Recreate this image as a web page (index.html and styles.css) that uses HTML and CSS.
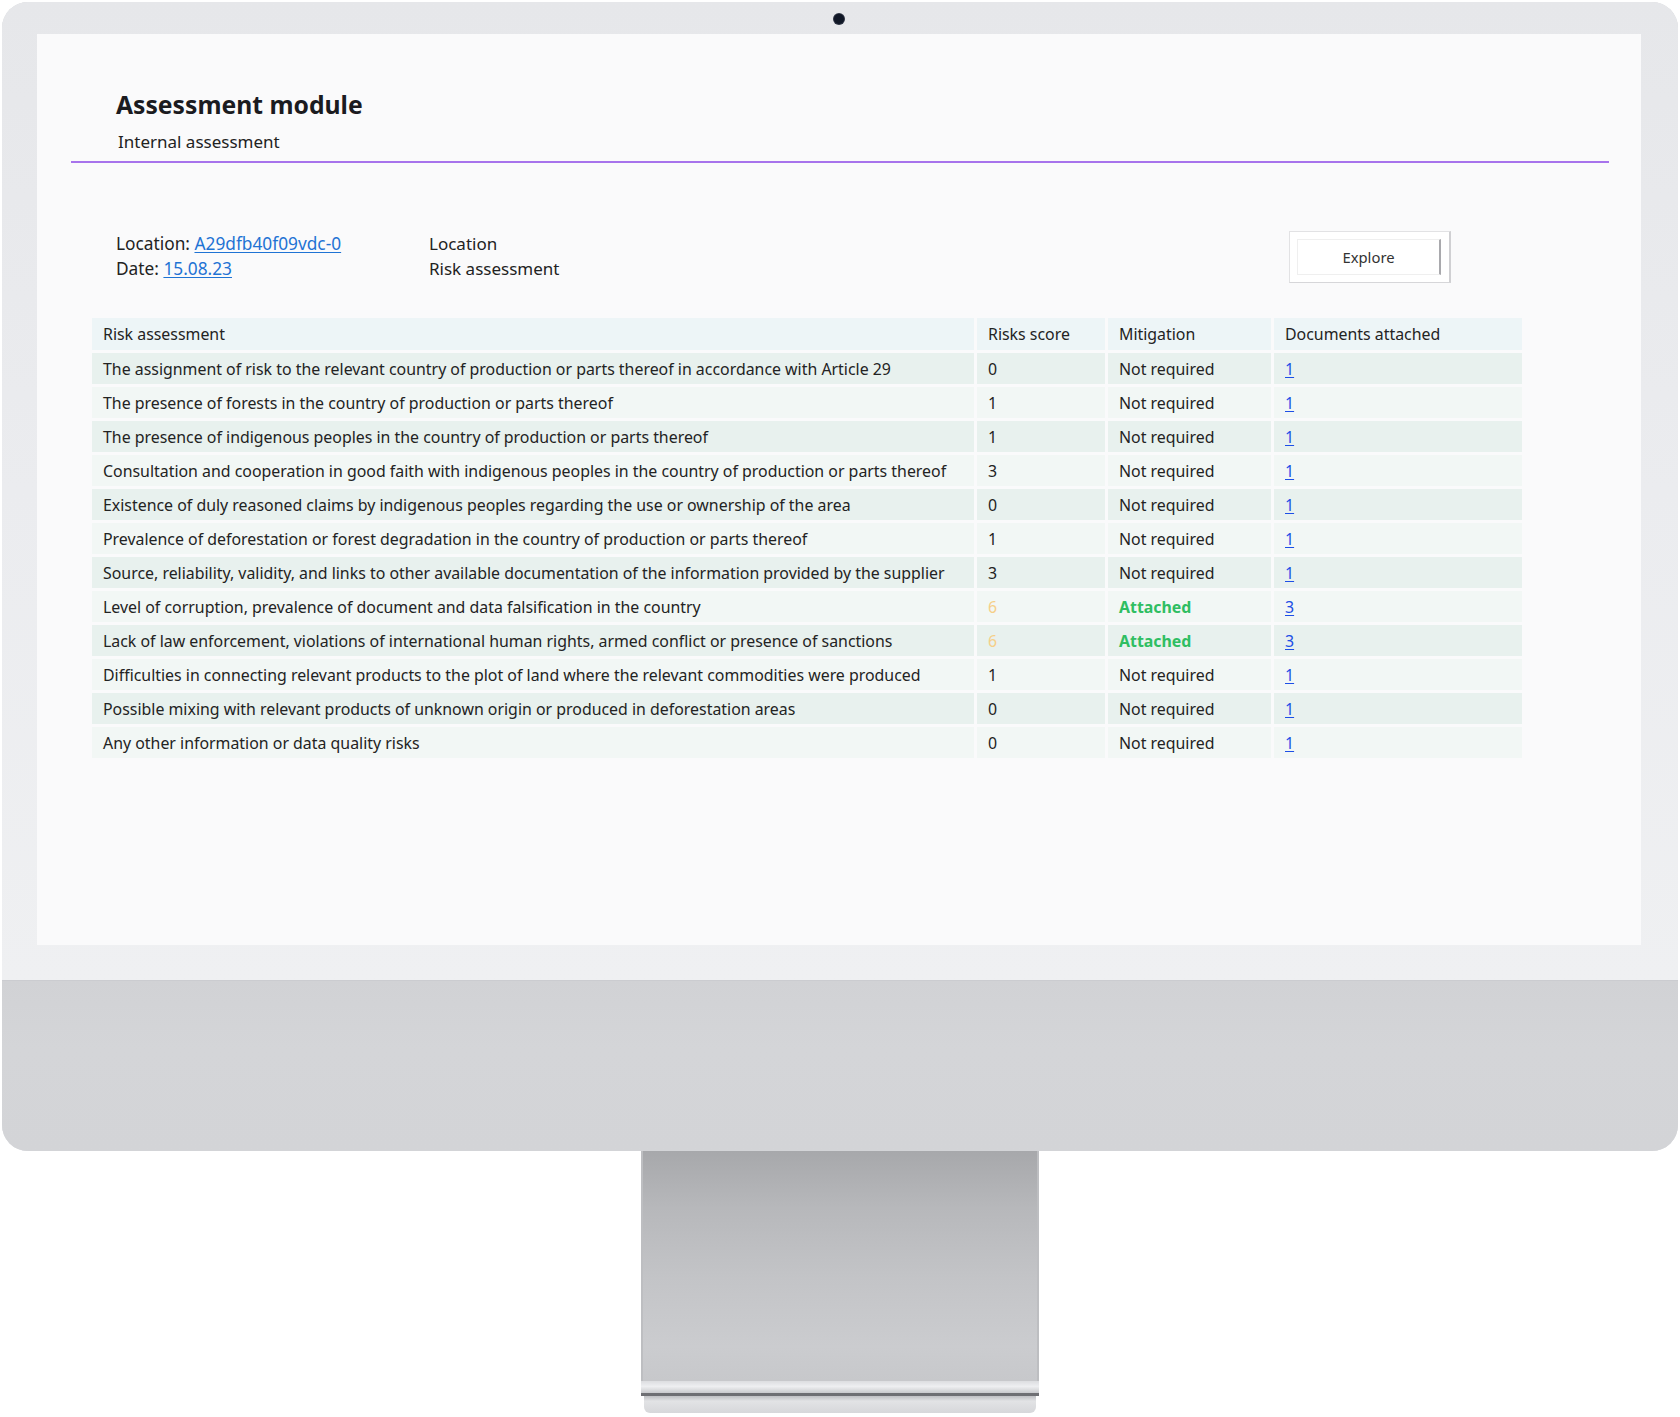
FILE: index.html
```html
<!DOCTYPE html>
<html lang="en">
<head>
<meta charset="utf-8">
<title>Assessment module</title>
<link rel="stylesheet" href="styles.css">
</head>
<body>
<div class="device">
  <div class="monitor">
    <div class="bezel">
      <div class="camera"></div>
      <main class="screen">
        <header class="page-head">
          <h1 class="title">Assessment module</h1>
          <div class="subtitle">Internal assessment</div>
        </header>
        <section class="content">
          <div class="info-row">
            <div class="info-main">
              <div class="info-line">Location: <a class="link" href="#">A29dfb40f09vdc-0</a></div>
              <div class="info-line">Date: <a class="link" href="#">15.08.23</a></div>
            </div>
            <div class="info-side">
              <div class="info-line">Location</div>
              <div class="info-line">Risk assessment</div>
            </div>
            <div class="explore-box"><button class="explore" type="button">Explore</button></div>
          </div>
          <table class="risk-table">
            <thead>
              <tr>
                <th class="c-name">Risk assessment</th>
                <th class="c-score">Risks score</th>
                <th class="c-mit">Mitigation</th>
                <th class="c-doc">Documents attached</th>
              </tr>
            </thead>
            <tbody>
              <tr><td>The assignment of risk to the relevant country of production or parts thereof in accordance with Article 29</td><td>0</td><td>Not required</td><td><a class="doc" href="#">1</a></td></tr>
              <tr><td>The presence of forests in the country of production or parts thereof</td><td>1</td><td>Not required</td><td><a class="doc" href="#">1</a></td></tr>
              <tr><td>The presence of indigenous peoples in the country of production or parts thereof</td><td>1</td><td>Not required</td><td><a class="doc" href="#">1</a></td></tr>
              <tr><td>Consultation and cooperation in good faith with indigenous peoples in the country of production or parts thereof</td><td>3</td><td>Not required</td><td><a class="doc" href="#">1</a></td></tr>
              <tr><td>Existence of duly reasoned claims by indigenous peoples regarding the use or ownership of the area</td><td>0</td><td>Not required</td><td><a class="doc" href="#">1</a></td></tr>
              <tr><td>Prevalence of deforestation or forest degradation in the country of production or parts thereof</td><td>1</td><td>Not required</td><td><a class="doc" href="#">1</a></td></tr>
              <tr><td>Source, reliability, validity, and links to other available documentation of the information provided by the supplier</td><td>3</td><td>Not required</td><td><a class="doc" href="#">1</a></td></tr>
              <tr><td>Level of corruption, prevalence of document and data falsification in the country</td><td class="warn">6</td><td class="ok">Attached</td><td><a class="doc" href="#">3</a></td></tr>
              <tr><td>Lack of law enforcement, violations of international human rights, armed conflict or presence of sanctions</td><td class="warn">6</td><td class="ok">Attached</td><td><a class="doc" href="#">3</a></td></tr>
              <tr><td>Difficulties in connecting relevant products to the plot of land where the relevant commodities were produced</td><td>1</td><td>Not required</td><td><a class="doc" href="#">1</a></td></tr>
              <tr><td>Possible mixing with relevant products of unknown origin or produced in deforestation areas</td><td>0</td><td>Not required</td><td><a class="doc" href="#">1</a></td></tr>
              <tr><td>Any other information or data quality risks</td><td>0</td><td>Not required</td><td><a class="doc" href="#">1</a></td></tr>
            </tbody>
          </table>
        </section>
      </main>
    </div>
    <div class="chin"></div>
  </div>
  <div class="stand">
    <div class="stand-face"></div>
    <div class="stand-lip"></div>
    <div class="stand-seam"></div>
    <div class="stand-foot"></div>
  </div>
</div>
</body>
</html>
```

FILE: styles.css
```css
* { box-sizing: border-box; }

html, body {
  margin: 0;
  padding: 0;
  background: #ffffff;
}

body {
  font-family: "Noto Sans", "Open Sans", "Liberation Sans", sans-serif;
  color: #222222;
  width: 1680px;
  height: 1417px;
  overflow: hidden;
}

.device {
  padding: 2px 0 0 2px;
  width: 1680px;
}

.monitor {
  width: 1676px;
  border-radius: 26px;
  overflow: hidden;
  background: #e9eaed;
  box-shadow: inset 0 0 0 1px #dcdde0;
}

.bezel {
  padding: 12px 37px 35px 35px;
  background: linear-gradient(180deg, #e6e7ea 0%, #ebecef 50%, #eff0f2 100%);
}

.camera {
  width: 10px;
  height: 10px;
  border-radius: 50%;
  background: #101726;
  margin: 0 auto 10px;
  box-shadow: 0 0 0 1px #2b3140;
}

.screen {
  display: block;
  height: 911px;
  background: #fafafb;
}

.chin {
  height: 171px;
  background: linear-gradient(180deg, #d1d2d5 0%, #d4d5d8 40%, #d3d4d7 100%);
  border-top: 1px solid #cbccd0;
}

.page-head {
  margin: 0 32px 0 34px;
  padding: 56px 0 8px 45px;
  border-bottom: 2px solid #a773ec;
}

.title {
  margin: 0;
  font-size: 24.7px;
  line-height: 30px;
  font-weight: 700;
  color: #1b1b1f;
}

.subtitle {
  margin-top: 11px;
  padding-left: 2px;
  font-size: 17px;
  line-height: 22px;
  color: #222222;
}

.content {
  padding: 0 0 0 55px;
  width: 1485px;
}

.info-row {
  display: flex;
  align-items: flex-start;
  margin-top: 68px;
  padding: 0 71px 0 24px;
  height: 53px;
}

.info-main {
  width: 313px;
}

.info-side {
  flex: 1;
}

.info-line {
  font-size: 17.3px;
  line-height: 25px;
  color: #222222;
}

.info-side .info-line {
  font-size: 17px;
}

.link {
  color: #1f73d4;
  text-decoration: underline;
  text-underline-offset: 2px;
}

.explore-box {
  width: 162px;
  height: 52px;
  padding: 7px 8px 7px 7px;
  background: #ffffff;
  border: 1px solid #e2e2e4;
  border-right: 2px solid #d0d0d3;
  border-bottom: 1px solid #d6d6d9;
}

.explore {
  display: block;
  width: 100%;
  height: 100%;
  background: #ffffff;
  border: 1px solid #efefef;
  border-right: 2px solid #a9a9ad;
  font-family: "Noto Sans", "Open Sans", "Liberation Sans", sans-serif;
  font-size: 14.8px;
  color: #333333;
  padding: 0;
}

.risk-table {
  margin: 31px 0 0 -3px;
  border-collapse: separate;
  border-spacing: 3px;
  table-layout: fixed;
  width: 1436px;
  font-size: 15.9px;
}

.risk-table th,
.risk-table td {
  padding: 0 0 0 11px;
  text-align: left;
  vertical-align: middle;
  font-weight: 400;
  white-space: nowrap;
  color: #232323;
}

.risk-table th {
  height: 32px;
  background: #edf5f7;
}

.risk-table td {
  height: 31px;
}

.risk-table tbody tr:nth-child(odd) td { background: #e8f1ee; }
.risk-table tbody tr:nth-child(even) td { background: #f2f7f5; }

.c-name { width: 882px; }
.c-score { width: 128px; }
.c-mit { width: 163px; }
.c-doc { width: 248px; }

.risk-table td.warn { color: #f6cf88; }
.risk-table td.ok { color: #2fbe62; font-weight: 700; }

.doc {
  color: #1d4fe6;
  text-decoration: underline;
  text-underline-offset: 2px;
}

.stand {
  width: 398px;
  margin-left: 639px;
}

.stand-face {
  height: 230px;
  background: linear-gradient(180deg, #a7a8ab 0%, #b7b8bb 25%, #c3c4c7 55%, #cbcccf 85%, #c7c8cb 100%);
  box-shadow: inset 2px 0 0 #bdbec1, inset -2px 0 0 #bdbec1;
}

.stand-lip {
  height: 12px;
  background: linear-gradient(180deg, #dcdde0 0%, #eeeff1 45%, #c9cacd 100%);
}

.stand-seam {
  height: 3px;
  background: #6e6f73;
}

.stand-foot {
  height: 17px;
  margin: 0 3px;
  border-radius: 0 0 6px 6px;
  background: linear-gradient(180deg, #bfc0c3 0%, #e2e3e5 30%, #d6d7da 100%);
}
```
